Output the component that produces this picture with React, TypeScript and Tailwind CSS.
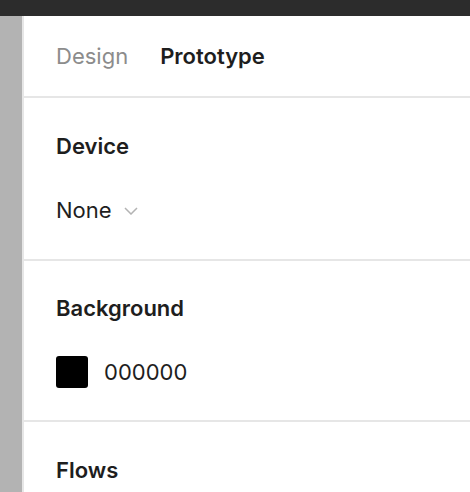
export default function App() {
    return (
        <div className="w-[470px] h-[492px] overflow-hidden bg-white flex flex-col" style={{ fontFamily: "Inter, 'Noto Sans', sans-serif" }}>
            <div className="h-4 bg-[#2c2c2c] shrink-0"></div>
            <div className="flex flex-1">
                <div className="w-[22px] bg-[#b3b3b3] border-r-2 border-[#e6e6e6] box-content"></div>
                <div className="flex-1 flex flex-col">
                    <div className="h-[82px] flex items-center gap-8 pl-8 text-[22px] leading-8 border-b-2 border-[#e6e6e6]">
                        <span className="text-[#8c8c8c]">Design</span>
                        <span className="font-semibold text-[#1e1e1e]">Prototype</span>
                    </div>
                    <div className="pl-8 pt-8 pb-[33px] border-b-2 border-[#e6e6e6] text-[22px] leading-8">
                        <div className="h-8 font-semibold text-[#1e1e1e]">Device</div>
                        <div className="h-8 mt-8 flex items-center gap-3 text-[#1e1e1e]">
                            <span>None</span>
                            <svg width="14" height="8" viewBox="0 0 14 8" fill="none" className="mt-0.5">
                                <path d="M1 1l6 6 6-6" stroke="#b3b3b3" strokeWidth="1.5" />
                            </svg>
                        </div>
                    </div>
                    <div className="pl-8 pt-[31px] pb-8 border-b-2 border-[#e6e6e6] text-[22px] leading-8">
                        <div className="h-8 font-semibold text-[#1e1e1e]">Background</div>
                        <div className="h-8 mt-8 flex items-center gap-4 text-[#1e1e1e]">
                            <div className="w-8 h-8 bg-black rounded-[3px]"></div>
                            <span>000000</span>
                        </div>
                    </div>
                    <div className="pl-8 pt-8 text-[22px] leading-8">
                        <div className="h-8 font-semibold text-[#1e1e1e]">Flows</div>
                    </div>
                </div>
            </div>
        </div>
    )
}
